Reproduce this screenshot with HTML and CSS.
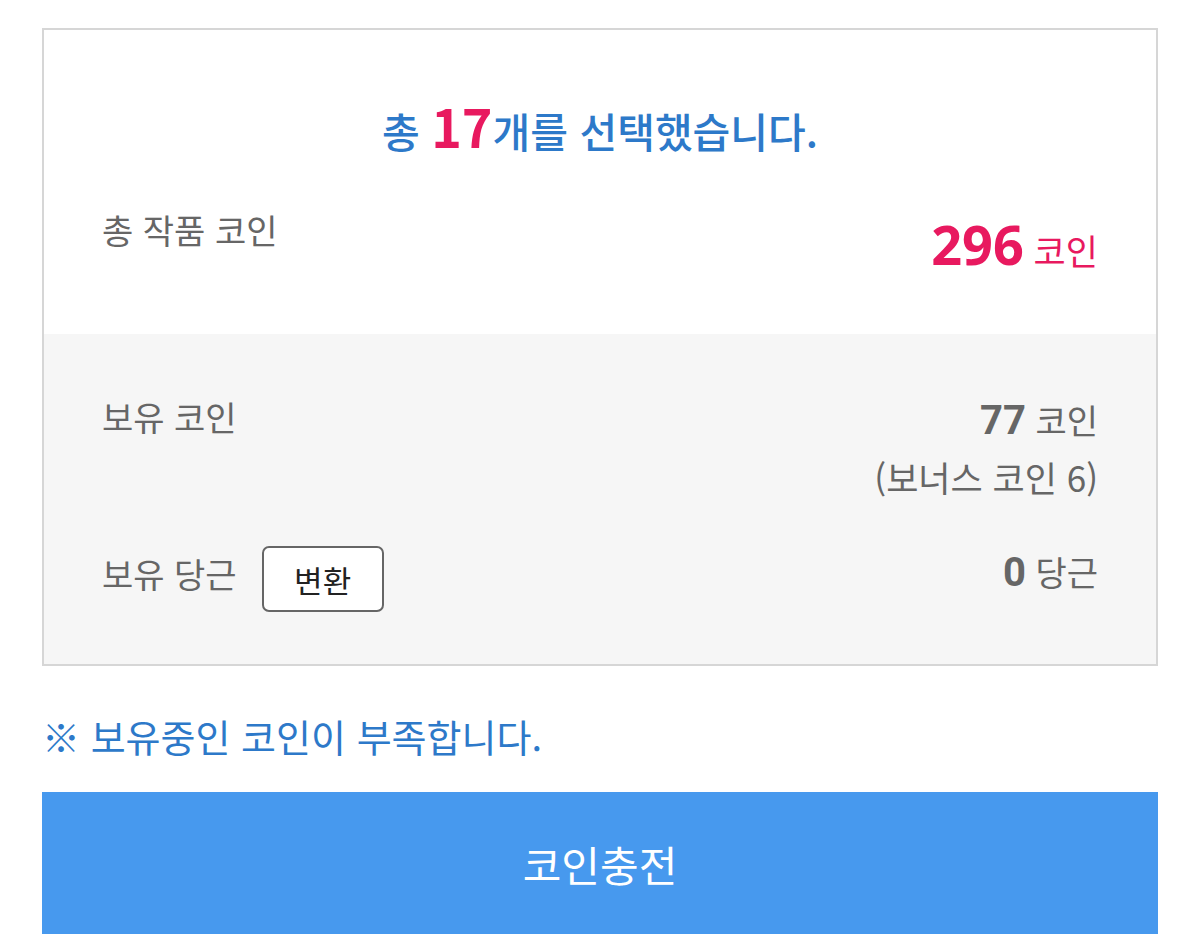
FILE: index.html
```html
<!DOCTYPE html>
<html lang="ko">
<head>
<meta charset="utf-8">
<link rel="stylesheet" href="styles.css">
</head>
<body>
<div class="page">
  <section class="summary">
    <div class="top">
      <h1 class="title">총 <em class="count">17</em>개를 선택했습니다.</h1>
      <div class="row row-total">
        <span class="label">총 작품 코인</span>
        <span class="value pink"><b class="big">296</b> 코인</span>
      </div>
    </div>
    <div class="bottom">
      <div class="row row-coin">
        <span class="label">보유 코인</span>
        <div class="value">
          <div><b class="num">77</b> 코인</div>
          <div class="sub">(보너스 코인 6)</div>
        </div>
      </div>
      <div class="row row-carrot">
        <span class="label">보유 당근 <button class="convert">변환</button></span>
        <span class="value"><b class="num">0</b> 당근</span>
      </div>
    </div>
  </section>
  <p class="notice">※ 보유중인 코인이 부족합니다.</p>
  <button class="charge">코인충전</button>
</div>
</body>
</html>
```

FILE: styles.css
```css
* { box-sizing: border-box; }
html, body { margin: 0; padding: 0; background: #fff; }
body {
  font-family: "Noto Sans CJK KR", "Noto Sans", sans-serif;
  color: #666;
}
.page {
  padding: 28px 42px 0 42px;
  width: 1200px;
}
.summary {
  border: 2px solid #d6d6d6;
}
.top {
  background: #fff;
  padding: 68px 58px 0 58px;
  height: 304px;
}
.title {
  margin: 0;
  text-align: center;
  font-size: 41px;
  line-height: 56px;
  font-weight: 500;
  color: #2d79c9;
}
.count {
  font-style: normal;
  color: #e8195f;
  font-size: 52px;
  font-weight: 700;
  line-height: 56px;
}
.row {
  display: flex;
  justify-content: space-between;
  align-items: flex-start;
}
.label {
  font-size: 34px;
  line-height: 48px;
  color: #666;
  display: flex;
  align-items: center;
}
.row-total { margin-top: 48px; }
.value {
  font-size: 34px;
  line-height: 48px;
  text-align: right;
  color: #666;
}
.pink { color: #e8195f; margin-top: 14px; font-size: 35px; }
.big {
  font-size: 54px;
  font-weight: 700;
  font-family: "Noto Sans", "Noto Sans CJK KR", sans-serif;
}
.bottom {
  background: #f6f6f6;
  padding: 59px 58px 0 58px;
  height: 330px;
}
.num {
  font-family: Roboto, "Noto Sans", sans-serif;
  font-weight: 700;
  font-size: 40px;
}
.sub { margin-top: 8px; font-size: 35px; }
.row-coin .value { margin-top: 3px; }
.row-carrot { margin-top: 35px; }
.convert {
  margin-left: 25px;
  margin-top: 10px;
  width: 122px;
  height: 66px;
  border: 2px solid #666;
  border-radius: 7px;
  background: #fff;
  font-family: "Noto Sans CJK KR", sans-serif;
  font-size: 31px;
  color: #222;
  padding: 0;
}
.row-carrot .value { margin-top: 12px; }
.notice {
  margin: 43px 0 0 0;
  font-size: 38px;
  line-height: 54px;
  color: #2d79c9;
}
.charge {
  display: block;
  margin-top: 29px;
  width: 1116px;
  height: 142px;
  border: none;
  background: #4799ee;
  color: #fff;
  font-family: "Noto Sans CJK KR", sans-serif;
  font-size: 42px;
  padding: 0;
}
```
